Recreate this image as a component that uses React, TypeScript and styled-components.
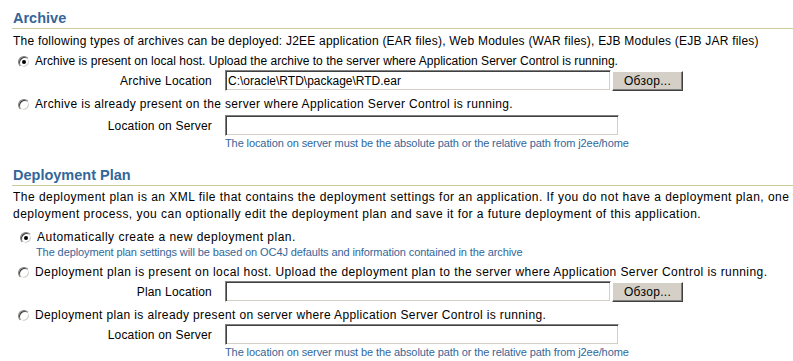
import styled, { createGlobalStyle } from "styled-components";

const GlobalStyle = createGlobalStyle`
  html, body {
    margin: 0;
    padding: 0;
    background: #ffffff;
    overflow: hidden;
  }
  body {
    font-family: "Liberation Sans", Arial, sans-serif;
    font-size: 12px;
    color: #000000;
  }
`;

const Page = styled.div`
  width: 793px;
  height: 361px;
  padding: 9px 0 0 13px;
  box-sizing: border-box;
  overflow: hidden;
`;

const Heading = styled.h2<{ $top?: number }>`
  margin: ${({ $top }) => $top ?? 0}px -20px 0 -1px;
  padding-left: 1px;
  font-size: 14.5px;
  font-weight: bold;
  line-height: 19px;
  color: #336699;
  border-bottom: 1px solid #cccc99;
`;

const Paragraph = styled.p<{ $top: number; $spacing: number }>`
  margin: ${({ $top }) => $top}px 0 0;
  line-height: 17px;
  white-space: nowrap;
  letter-spacing: ${({ $spacing }) => $spacing}px;
`;

const RadioRow = styled.label<{ $top: number; $indent?: number; $spacing: number }>`
  display: flex;
  align-items: center;
  gap: 5px;
  margin-top: ${({ $top }) => $top}px;
  padding-left: ${({ $indent }) => $indent ?? 5}px;
  line-height: 17px;
  white-space: nowrap;
  letter-spacing: ${({ $spacing }) => $spacing}px;
`;

const Radio = styled.span<{ $checked?: boolean }>`
  position: relative;
  flex: none;
  width: 10px;
  height: 10px;
  border-radius: 50%;
  border: 1px solid;
  border-color: #808080 #ffffff #ffffff #808080;
  box-shadow: inset 1px 1px 0 #404040, inset -1px -1px 0 #d4d0c8;
  background: #ffffff;

  &::after {
    content: "";
    display: ${({ $checked }) => ($checked ? "block" : "none")};
    position: absolute;
    left: 3px;
    top: 3px;
    width: 4px;
    height: 4px;
    border-radius: 50%;
    background: #000000;
  }
`;

const FieldRow = styled.div<{ $top?: number }>`
  display: grid;
  grid-template-columns: 199px auto auto;
  column-gap: 13px;
  align-items: center;
  margin-top: ${({ $top }) => $top ?? 0}px;
  height: 21px;
`;

const FieldLabel = styled.span`
  text-align: right;
  white-space: nowrap;
  letter-spacing: 0.2px;
`;

const Controls = styled.div`
  display: flex;
  align-items: center;
  gap: 1px;
`;

const TextInput = styled.input<{ $width: number }>`
  width: ${({ $width }) => $width}px;
  height: 21px;
  box-sizing: border-box;
  margin: 0;
  padding: 0 2px;
  border: 1px solid;
  border-color: #808080 #ffffff #ffffff #808080;
  box-shadow: inset 1px 1px 0 #404040, inset -1px -1px 0 #d4d0c8;
  background: #ffffff;
  font-family: "Liberation Sans", Arial, sans-serif;
  font-size: 12px;
  color: #000000;
  outline: none;
`;

const BrowseButton = styled.button`
  width: 71px;
  height: 20px;
  margin: 1px 0 0;
  padding: 0;
  box-sizing: border-box;
  background: #d4d0c8;
  border: 1px solid;
  border-color: #ffffff #404040 #404040 #ffffff;
  box-shadow: inset -1px -1px 0 #808080, inset 1px 1px 0 #d4d0c8;
  font-family: "Liberation Sans", Arial, sans-serif;
  font-size: 12px;
  letter-spacing: 0.3px;
  color: #000000;
`;

const Hint = styled.div<{ $left: number; $top?: number }>`
  margin: ${({ $top }) => $top ?? 0}px 0 0 ${({ $left }) => $left}px;
  font-size: 11px;
  line-height: 14px;
  letter-spacing: -0.1px;
  color: #336699;
  white-space: nowrap;
`;

const LOCATION_HINT =
  "The location on server must be the absolute path or the relative path from j2ee/home";

export default function App() {
  return (
    <>
      <GlobalStyle />
      <Page>
        <Heading>Archive</Heading>
        <Paragraph $top={4} $spacing={0.22}>
          The following types of archives can be deployed: J2EE application (EAR
          files), Web Modules (WAR files), EJB Modules (EJB JAR files)
        </Paragraph>

        <RadioRow $top={3} $spacing={0.03}>
          <Radio $checked />
          Archive is present on local host. Upload the archive to the server
          where Application Server Control is running.
        </RadioRow>
        <FieldRow>
          <FieldLabel>Archive Location</FieldLabel>
          <Controls>
            <TextInput
              $width={386}
              readOnly
              value="C:\oracle\RTD\package\RTD.ear"
            />
            <BrowseButton>Обзор...</BrowseButton>
          </Controls>
        </FieldRow>

        <RadioRow $top={5} $spacing={0.35}>
          <Radio />
          Archive is already present on the server where Application Server
          Control is running.
        </RadioRow>
        <FieldRow $top={2}>
          <FieldLabel>Location on Server</FieldLabel>
          <Controls>
            <TextInput $width={394} readOnly value="" />
          </Controls>
        </FieldRow>
        <Hint $left={212}>{LOCATION_HINT}</Hint>

        <Heading $top={16}>Deployment Plan</Heading>
        <Paragraph $top={3} $spacing={0.47}>
          The deployment plan is an XML file that contains the deployment
          settings for an application. If you do not have a deployment plan, one
          will be created. During the
          <br />
          deployment process, you can optionally edit the deployment plan and
          save it for a future deployment of this application.
        </Paragraph>

        <RadioRow $top={6} $indent={7} $spacing={0.48}>
          <Radio $checked />
          Automatically create a new deployment plan.
        </RadioRow>
        <Hint $left={23} $top={-1}>
          The deployment plan settings will be based on OC4J defaults and
          information contained in the archive
        </Hint>

        <RadioRow $top={5} $spacing={0.42}>
          <Radio />
          Deployment plan is present on local host. Upload the deployment plan
          to the server where Application Server Control is running.
        </RadioRow>
        <FieldRow>
          <FieldLabel>Plan Location</FieldLabel>
          <Controls>
            <TextInput $width={386} readOnly value="" />
            <BrowseButton>Обзор...</BrowseButton>
          </Controls>
        </FieldRow>

        <RadioRow $top={5} $spacing={0.37}>
          <Radio />
          Deployment plan is already present on server where Application Server
          Control is running.
        </RadioRow>
        <FieldRow>
          <FieldLabel>Location on Server</FieldLabel>
          <Controls>
            <TextInput $width={394} readOnly value="" />
          </Controls>
        </FieldRow>
        <Hint $left={212}>{LOCATION_HINT}</Hint>
      </Page>
    </>
  );
}
